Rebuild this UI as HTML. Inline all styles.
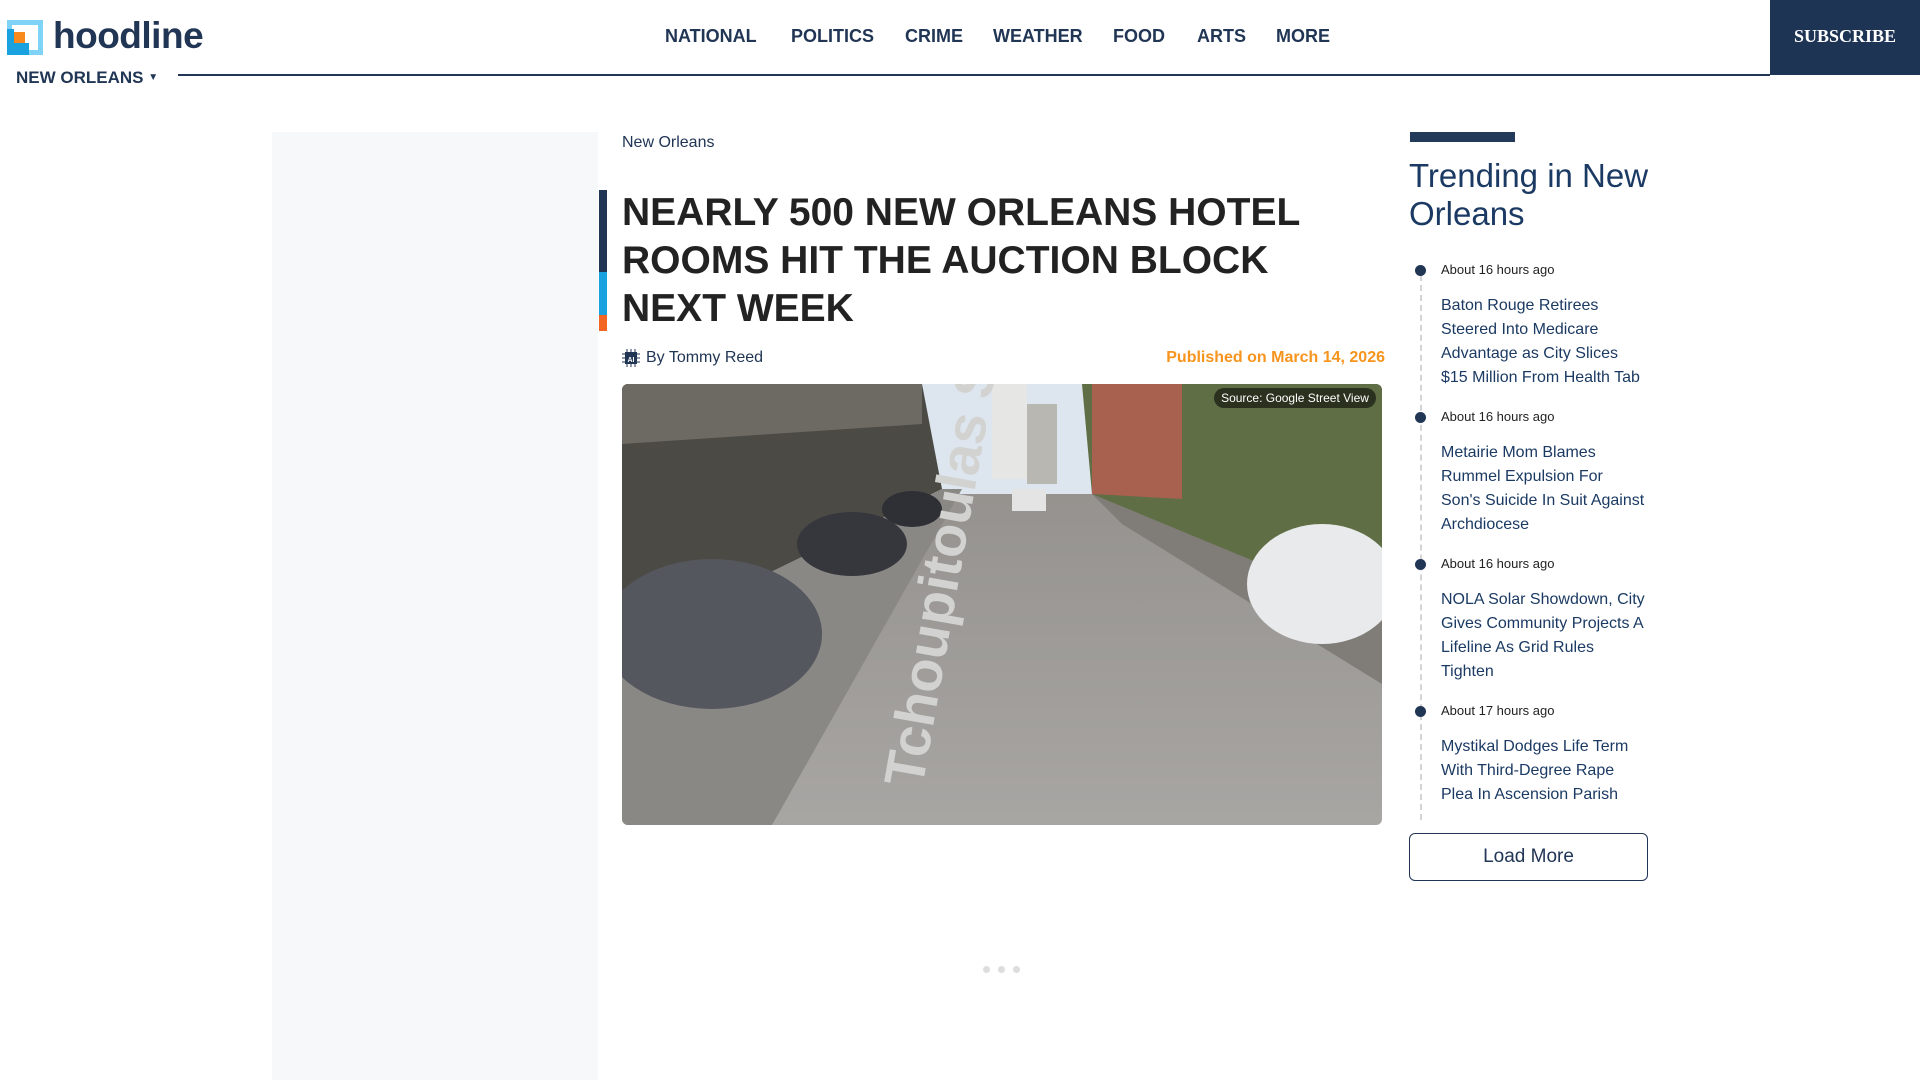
<!DOCTYPE html>
<html><head><meta charset="utf-8"><style>
*{margin:0;padding:0;box-sizing:border-box}
body{width:1920px;height:1080px;overflow:hidden;background:#fff;font-family:"Liberation Sans",sans-serif;color:#213555;position:relative}
.abs{position:absolute}
.nav a{position:absolute;top:26px;font-weight:bold;font-size:18px;color:#213555;text-decoration:none;white-space:nowrap}
.tl-time{position:absolute;left:1441px;font-size:13px;color:#222;white-space:nowrap}
.tl-title{position:absolute;left:1441px;width:205px;font-size:16px;line-height:24px;color:#1b3a63;font-weight:500}
.dot{position:absolute;left:1415px;width:11px;height:11px;border-radius:50%;background:#213555}
</style></head><body>
<svg class="abs" style="left:7px;top:20px" width="36" height="35" viewBox="0 0 36 35">
<rect x="0" y="0" width="36" height="35" fill="#7fd3f7"/>
<rect x="5" y="5" width="26" height="25" fill="#fff"/>
<rect x="0" y="9" width="22" height="26" fill="#1aa2e0"/>
<rect x="7" y="9" width="15" height="14" fill="#fff"/>
<rect x="7" y="12" width="11" height="11" fill="#f7891f"/>
</svg>
<div class="abs" style="left:53px;top:15px;font-size:37px;font-weight:bold;color:#213555;letter-spacing:-0.5px">hoodline</div>
<div class="abs" style="left:16px;top:68px;font-size:17px;font-weight:bold;color:#213555">NEW ORLEANS <span style="font-size:10px;vertical-align:3px">▼</span></div>
<div class="abs" style="left:178px;top:74px;width:1592px;height:2px;background:#213555"></div>
<div class="nav">
<a style="left:665px">NATIONAL</a><a style="left:791px">POLITICS</a><a style="left:905px">CRIME</a><a style="left:993px">WEATHER</a><a style="left:1113px">FOOD</a><a style="left:1197px">ARTS</a><a style="left:1276px">MORE</a>
</div>
<div class="abs" style="left:1770px;top:0;width:150px;height:75px;background:#1e3454;color:#fff;font-family:'Liberation Serif',serif;font-weight:bold;font-size:18px;text-align:center;line-height:73px">SUBSCRIBE</div>

<div class="abs" style="left:272px;top:132px;width:326px;height:948px;background:#f7f8fa"></div>

<div class="abs" style="left:599px;top:190px;width:8px;height:82px;background:#213555"></div>
<div class="abs" style="left:599px;top:272px;width:8px;height:43px;background:#1aa2e0"></div>
<div class="abs" style="left:599px;top:315px;width:8px;height:16px;background:#f26522"></div>

<div class="abs" style="left:622px;top:134px;font-size:16px;color:#213555">New Orleans</div>
<div class="abs" style="left:622px;top:189px;font-size:39px;line-height:48px;font-weight:bold;color:#222;white-space:nowrap">NEARLY 500 NEW ORLEANS HOTEL<br>ROOMS HIT THE AUCTION BLOCK<br>NEXT WEEK</div>

<svg class="abs" style="left:622px;top:349px" width="18" height="18" viewBox="0 0 18 18"><rect x="3" y="3" width="12" height="12" fill="#213555"/><g stroke="#213555" stroke-width="1"><path d="M5 0v3M9 0v3M13 0v3M5 15v3M9 15v3M13 15v3M0 5h3M0 9h3M0 13h3M15 5h3M15 9h3M15 13h3"/></g><text x="9" y="13" font-size="7" fill="#fff" text-anchor="middle" font-family="Liberation Sans" font-weight="bold">AI</text></svg>
<div class="abs" style="left:646px;top:349px;font-size:16px;color:#213555">By Tommy Reed</div>
<div class="abs" style="right:535px;top:349px;font-size:16px;font-weight:bold;color:#f7941d">Published on March 14, 2026</div>

<svg class="abs" style="left:622px;top:384px;border-radius:6px" width="760" height="441" viewBox="0 0 760 441">
<defs><linearGradient id="rd" x1="0" y1="0" x2="0" y2="1"><stop offset="0" stop-color="#8f8c88"/><stop offset="1" stop-color="#a8a6a3"/></linearGradient></defs>
<rect width="760" height="441" fill="url(#rd)"/>
<rect x="300" y="0" width="180" height="110" fill="#dde6ee"/>
<rect x="370" y="0" width="35" height="95" fill="#e6e6e4"/>
<rect x="405" y="20" width="30" height="80" fill="#b8b7b2"/>
<polygon points="0,0 300,0 320,105 0,260" fill="#4c4a44"/>
<polygon points="0,0 300,0 300,40 0,60" fill="#6c6a63"/>
<polygon points="460,0 760,0 760,260 470,110" fill="#5f6e45"/>
<polygon points="470,0 560,0 560,115 470,110" fill="#a8604f"/>
<polygon points="0,260 320,105 340,105 150,441 0,441" fill="#8a8885"/>
<polygon points="470,110 760,230 760,300 500,140" fill="#807d78"/>
<ellipse cx="90" cy="250" rx="110" ry="75" fill="#55575f"/>
<ellipse cx="230" cy="160" rx="55" ry="32" fill="#35373d"/>
<ellipse cx="290" cy="125" rx="30" ry="18" fill="#2e3036"/>
<ellipse cx="700" cy="200" rx="75" ry="60" fill="#e9eaec"/>
<rect x="390" y="105" width="34" height="22" fill="#e4e4e4"/>
<text x="0" y="0" font-size="56" fill="#d2d2d0" font-family="Liberation Sans" font-weight="bold" transform="translate(300 405) rotate(-80)">Tchoupitoulas St</text>
<rect x="592" y="4" width="162" height="20" rx="10" fill="rgba(0,0,0,0.55)"/>
<text x="673" y="18" font-size="12" fill="#fff" text-anchor="middle" font-family="Liberation Sans">Source: Google Street View</text>
</svg>

<div class="abs" style="left:983px;top:966px;width:7px;height:7px;border-radius:50%;background:#ddd"></div>
<div class="abs" style="left:998px;top:966px;width:7px;height:7px;border-radius:50%;background:#ddd"></div>
<div class="abs" style="left:1013px;top:966px;width:7px;height:7px;border-radius:50%;background:#ddd"></div>

<div class="abs" style="left:1410px;top:132px;width:105px;height:10px;background:#243a5a"></div>
<div class="abs" style="left:1409px;top:157px;font-size:33px;line-height:38px;color:#1b3a63;width:260px">Trending in New Orleans</div>
<div class="abs" style="left:1420px;top:275px;height:545px;border-left:2px dashed #d4d4d4"></div>
<div class="dot" style="top:265px"></div>
<div class="tl-time" style="top:262px">About 16 hours ago</div>
<div class="tl-title" style="top:294px">Baton Rouge Retirees Steered Into Medicare Advantage as City Slices $15 Million From Health Tab</div>
<div class="dot" style="top:412px"></div>
<div class="tl-time" style="top:409px">About 16 hours ago</div>
<div class="tl-title" style="top:441px">Metairie Mom Blames Rummel Expulsion For Son's Suicide In Suit Against Archdiocese</div>
<div class="dot" style="top:559px"></div>
<div class="tl-time" style="top:556px">About 16 hours ago</div>
<div class="tl-title" style="top:588px">NOLA Solar Showdown, City Gives Community Projects A Lifeline As Grid Rules Tighten</div>
<div class="dot" style="top:706px"></div>
<div class="tl-time" style="top:703px">About 17 hours ago</div>
<div class="tl-title" style="top:735px">Mystikal Dodges Life Term With Third-Degree Rape Plea In Ascension Parish</div>
<div class="abs" style="left:1409px;top:833px;width:239px;height:48px;border:1.5px solid #213555;border-radius:6px;text-align:center;line-height:45px;font-size:19px;color:#213555">Load More</div>
</body></html>
